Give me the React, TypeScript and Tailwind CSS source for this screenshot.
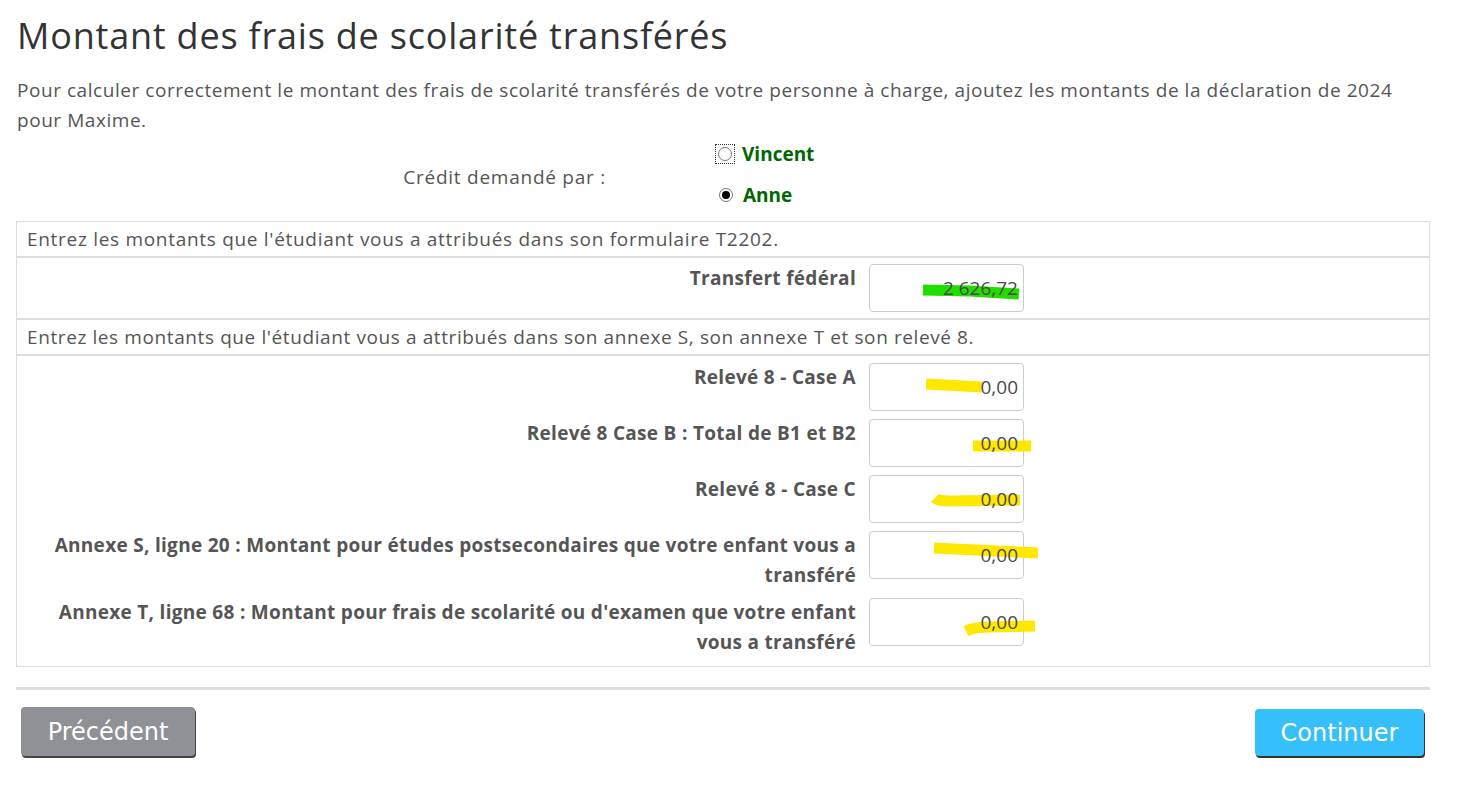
import React from "react";

type Mark = { color: string; d: string };

const GREEN = "#22dd00";
const YELLOW = "#ffe800";

const fields: { label: string[]; value: string; mark: Mark }[] = [
  {
    label: ["Relevé 8 - Case A"],
    value: "0,00",
    mark: { color: YELLOW, d: "M56 20 L 112 23" },
  },
  {
    label: ["Relevé 8 Case B : Total de B1 et B2"],
    value: "0,00",
    mark: { color: YELLOW, d: "M103 26 L 161 26" },
  },
  {
    label: ["Relevé 8 - Case C"],
    value: "0,00",
    mark: { color: YELLOW, d: "M65 22 Q 68 25, 80 25 L 150 24" },
  },
  {
    label: [
      "Annexe S, ligne 20 : Montant pour études postsecondaires que votre enfant vous a",
      "transféré",
    ],
    value: "0,00",
    mark: { color: YELLOW, d: "M64 16 L 168 21" },
  },
  {
    label: [
      "Annexe T, ligne 68 : Montant pour frais de scolarité ou d'examen que votre enfant",
      "vous a transféré",
    ],
    value: "0,00",
    mark: { color: YELLOW, d: "M96 32 Q 104 28, 120 28 L 165 27" },
  },
];

const AmountInput = ({ value, mark }: { value: string; mark: Mark }) => (
  <div className="relative w-[155px] h-[48px] border border-[#cccccc] rounded-[4px] bg-white shrink-0">
    <svg
      className="absolute left-0 top-0 overflow-visible"
      width="155"
      height="48"
      viewBox="0 0 155 48"
    >
      <path d={mark.d} stroke={mark.color} strokeWidth="11" fill="none" />
    </svg>
    <div className="absolute inset-0 flex items-center justify-end pr-[5px] text-[19px] text-[#4a4a4a]">
      {value}
    </div>
  </div>
);

const FieldRow = ({
  label,
  value,
  mark,
}: {
  label: string[];
  value: string;
  mark: Mark;
}) => (
  <div className="flex items-start">
    <div className="w-[852px] pr-[13px] -mt-[1px] text-right font-bold text-[19px] tracking-[0.3px] leading-[30px] text-[#555555]">
      {label.map((l) => (
        <div key={l}>{l}</div>
      ))}
    </div>
    <AmountInput value={value} mark={mark} />
  </div>
);

const Radio = ({ checked, focused }: { checked?: boolean; focused?: boolean }) => (
  <span
    className={
      "flex items-center justify-center w-[18px] h-[18px] " +
      (focused ? "outline outline-1 outline-dotted outline-[#333]" : "")
    }
  >
    <span className="flex items-center justify-center w-[14px] h-[14px] rounded-full border border-[#767676] bg-white">
      {checked && <span className="w-[8px] h-[8px] rounded-full bg-black" />}
    </span>
  </span>
);

export default function App() {
  return (
    <div
      className="min-h-[793px] bg-white px-4 pt-[14px]"
      style={{ fontFamily: "'Open Sans', sans-serif" }}
    >
      <div className="w-[1414px]">
        <h1 className="text-[36px] tracking-[0.8px] leading-[44px] text-[#333333] ml-[1px]">
          Montant des frais de scolarité transférés
        </h1>

        <p className="mt-[17px] text-[19px] tracking-[0.55px] leading-[30px] text-[#555555] ml-[1px]">
          Pour calculer correctement le montant des frais de scolarité transférés de votre
          personne à charge, ajoutez les montants de la déclaration de 2024
          <br />
          pour Maxime.
        </p>

        <div className="flex items-center mt-[5px]">
          <div className="w-[690px] text-right text-[19px] tracking-[0.75px] text-[#555555] pr-[100px] pt-[6px]">
            Crédit demandé par :
          </div>
          <div className="flex flex-col gap-[12px] ml-[10px]">
            <label className="flex items-center gap-[8px] text-[19px] font-bold text-[#006600]">
              <Radio focused />
              Vincent
            </label>
            <label className="flex items-center gap-[8px] text-[19px] font-bold text-[#006600] pl-[1px]">
              <Radio checked />
              Anne
            </label>
          </div>
        </div>

        <div className="mt-[12px] border border-[#dddddd]">
          <div className="h-[36px] flex items-center px-[10px] text-[19px] tracking-[0.7px] text-[#555555] border-b-2 border-[#dddddd]">
            Entrez les montants que l'étudiant vous a attribués dans son formulaire T2202.
          </div>
          <div className="pt-[6px] pb-[6px] border-b-2 border-[#dddddd]">
            <FieldRow
              label={["Transfert fédéral"]}
              value="2 626,72"
              mark={{ color: GREEN, d: "M53 25 L 100 26 L 149 29" }}
            />
          </div>
          <div className="h-[36px] flex items-center px-[10px] text-[19px] tracking-[0.6px] text-[#555555] border-b-2 border-[#dddddd]">
            Entrez les montants que l'étudiant vous a attribués dans son annexe S, son annexe T
            et son relevé 8.
          </div>
          <div className="pt-[7px] pb-[9px] flex flex-col gap-[8px]">
            {fields.map((f) => (
              <FieldRow key={f.label[0]} label={f.label} value={f.value} mark={f.mark} />
            ))}
          </div>
        </div>

        <div className="mt-[20px] h-[3px] bg-[#dddddd]" />

        <div
          className="flex justify-between items-start mt-[17px] px-[5px]"
          style={{ fontFamily: "'DejaVu Sans', sans-serif" }}
        >
          <button className="w-[174px] h-[49px] rounded-[4px] bg-[#8f9196] text-white text-[24px] shadow-[1px_2px_0_#444]">
            Précédent
          </button>
          <button className="mt-[2px] mr-[1px] w-[169px] h-[47px] rounded-[4px] bg-[#35c0fb] text-white text-[24px] shadow-[1px_2px_0_#333]">
            Continuer
          </button>
        </div>
      </div>
    </div>
  );
}
